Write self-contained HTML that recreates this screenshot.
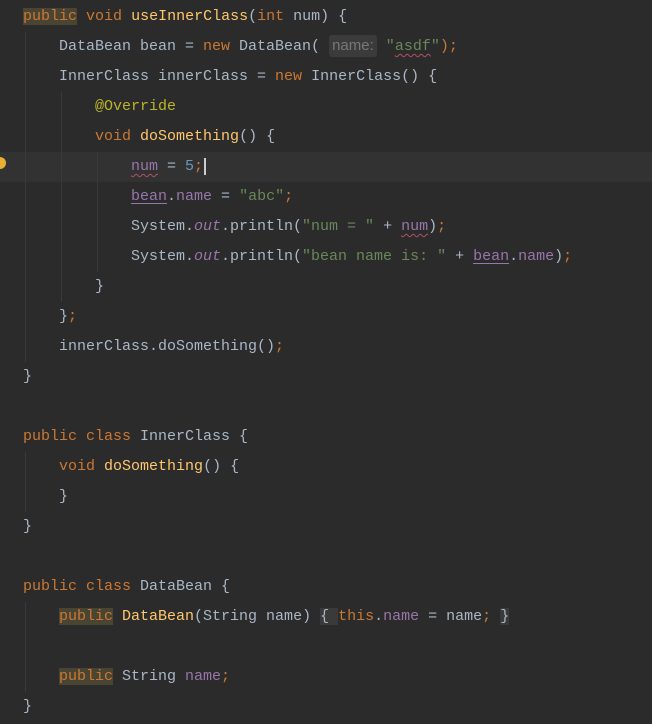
<!DOCTYPE html>
<html><head><meta charset="utf-8"><style>
html,body{margin:0;padding:0;background:#2b2b2b;}
body{width:652px;height:724px;position:relative;overflow:hidden;font-family:"Liberation Mono",monospace;font-size:15px;color:#a9b7c6;}
.l{position:absolute;left:0;height:30px;line-height:30px;white-space:pre;}
.k{color:#cc7832}.m{color:#ffc66d}.s{color:#6a8759}.n{color:#6897bb}.a{color:#bbb529}.f{color:#9876aa}.i{font-style:italic;color:#9876aa}
.u{text-decoration:underline;text-underline-offset:3px}
.w{text-decoration:underline wavy #b0506a;text-decoration-thickness:1px;text-underline-offset:3px}
.hl{background:#4a4532;}
.hint{display:inline-block;background:#3b3b3b;color:#787878;font-family:"Liberation Sans",sans-serif;font-size:15px;border-radius:3px;padding:0 3px;line-height:22px;}
.b{background:#3a3a3a}
.g{position:absolute;width:1px;background:#3a3a3a;}
</style></head><body>
<div style="position:absolute;left:0;top:152px;width:652px;height:30px;background:#323232"></div>
<div class="g" style="left:25px;top:32px;height:330px"></div>
<div class="g" style="left:61px;top:92px;height:210px"></div>
<div class="g" style="left:97px;top:152px;height:120px"></div>
<div class="g" style="left:25px;top:452px;height:60px"></div>
<div class="g" style="left:25px;top:602px;height:90px"></div>
<div style="position:absolute;left:0;top:157px;width:6px;height:12px;background:#e8b030;border-radius:0 6px 6px 0"></div>
<div class="l" style="top:2px;left:23px"><span class="k hl">public</span> <span class="k">void</span> <span class="m">useInnerClass</span>(<span class="k">int</span> num) {</div>
<div class="l" style="top:32px;left:59px">DataBean bean = <span class="k">new</span> DataBean( <span class="hint">name:</span> <span class="s">"<span class="w">asdf</span>"</span><span class="k">)</span><span class="k">;</span></div>
<div class="l" style="top:62px;left:59px">InnerClass innerClass = <span class="k">new</span> InnerClass() {</div>
<div class="l" style="top:92px;left:95px"><span class="a">@Override</span></div>
<div class="l" style="top:122px;left:95px"><span class="k">void</span> <span class="m">doSomething</span>() {</div>
<div class="l" style="top:152px;left:131px"><span class="f w">num</span> = <span class="n">5</span><span class="k">;</span><span style="border-left:2px solid #ccc;margin-left:1px"></span></div>
<div class="l" style="top:182px;left:131px"><span class="f u">bean</span>.<span class="f">name</span> = <span class="s">"abc"</span><span class="k">;</span></div>
<div class="l" style="top:212px;left:131px">System.<span class="i">out</span>.println(<span class="s">"num = "</span> + <span class="f w">num</span>)<span class="k">;</span></div>
<div class="l" style="top:242px;left:131px">System.<span class="i">out</span>.println(<span class="s">"bean name is: "</span> + <span class="f u">bean</span>.<span class="f">name</span>)<span class="k">;</span></div>
<div class="l" style="top:272px;left:95px">}</div>
<div class="l" style="top:302px;left:59px">}<span class="k">;</span></div>
<div class="l" style="top:332px;left:59px">innerClass.doSomething()<span class="k">;</span></div>
<div class="l" style="top:362px;left:23px">}</div>
<div class="l" style="top:422px;left:23px"><span class="k">public class</span> InnerClass {</div>
<div class="l" style="top:452px;left:59px"><span class="k">void</span> <span class="m">doSomething</span>() {</div>
<div class="l" style="top:482px;left:59px">}</div>
<div class="l" style="top:512px;left:23px">}</div>
<div class="l" style="top:572px;left:23px"><span class="k">public class</span> DataBean {</div>
<div class="l" style="top:602px;left:59px"><span class="k hl">public</span> <span class="m">DataBean</span>(String name) <span class="b">{ </span><span class="k">this</span>.<span class="f">name</span> = name<span class="k">;</span> <span class="b">}</span></div>
<div class="l" style="top:662px;left:59px"><span class="k hl">public</span> String <span class="f">name</span><span class="k">;</span></div>
<div class="l" style="top:692px;left:23px">}</div>
</body></html>
